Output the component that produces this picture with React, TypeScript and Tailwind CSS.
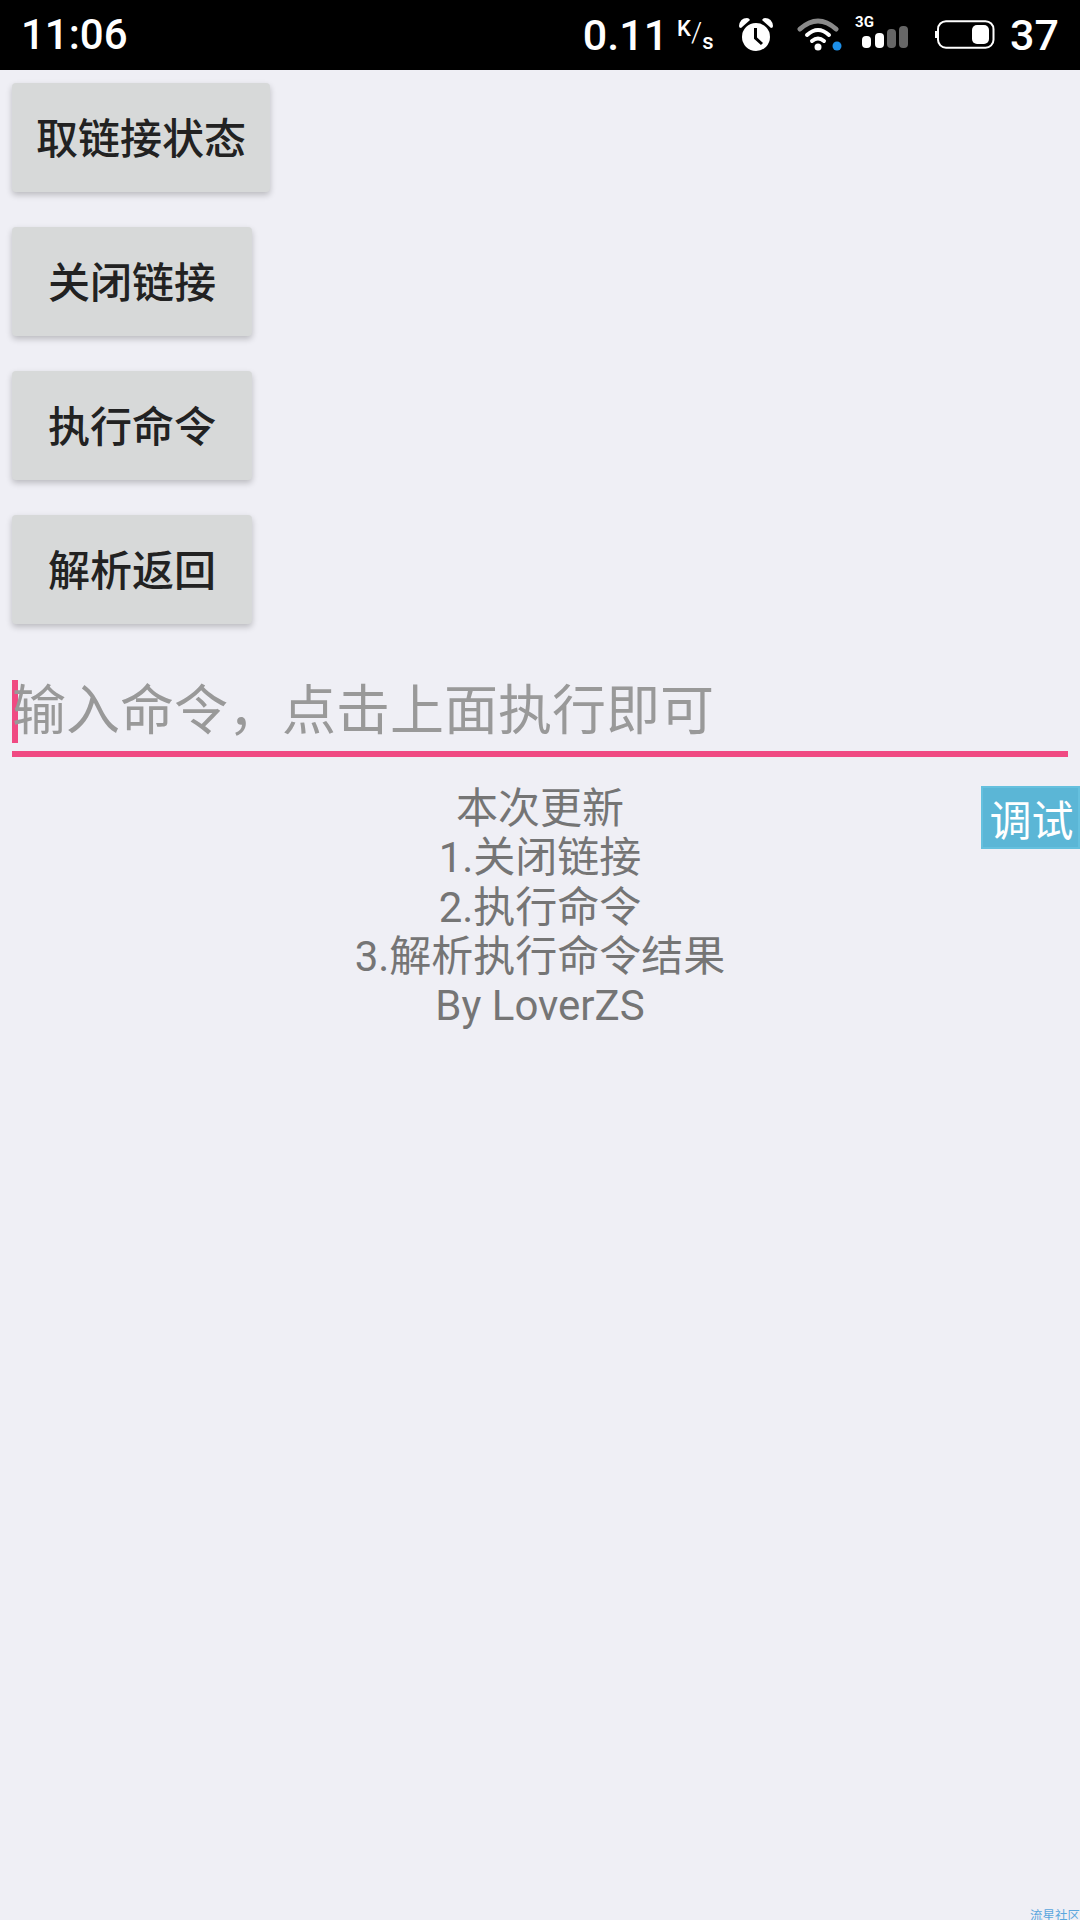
const cjk = "font-['Noto_Sans_CJK_SC','Roboto',sans-serif]";
const latin = "font-['Roboto','Noto_Sans_CJK_SC',sans-serif]";

function ActionButton({ label, width }: { label: string; width: string }) {
  return (
    <button
      className={`flex h-[109px] ${width} items-center justify-center rounded-[4px] bg-[#d7d9d9] pb-[4px] text-[42px] font-medium text-[#222222] shadow-[0_3px_6px_rgba(0,0,0,0.22)] ${cjk}`}
    >
      {label}
    </button>
  );
}

function AlarmIcon() {
  return (
    <svg width="38" height="36" viewBox="0 0 38 36" fill="none">
      <circle cx="19" cy="20" r="14" fill="#fff" />
      <path d="M2 9 Q3 1 10 1 Q12 1 13 3 L4 11 Q2 11 2 9Z" fill="#fff" />
      <path d="M36 9 Q35 1 28 1 Q26 1 25 3 L34 11 Q36 11 36 9Z" fill="#fff" />
      <path d="M18.5 11 V21 L25 27" stroke="#000" strokeWidth="3" />
    </svg>
  );
}

function WifiIcon() {
  return (
    <svg width="48" height="36" viewBox="0 0 48 36" fill="none">
      <path d="M3 12 Q21 -4 39 12" stroke="#8a8a8a" strokeWidth="5" strokeLinecap="round" />
      <path d="M10 18 Q21 8 32 18" stroke="#fff" strokeWidth="4" strokeLinecap="round" />
      <path d="M15 24 Q21 19 27 24" stroke="#fff" strokeWidth="4" strokeLinecap="round" />
      <circle cx="21" cy="30" r="3.5" fill="#fff" />
      <circle cx="40" cy="29" r="4.5" fill="#1d8fe8" />
    </svg>
  );
}

function SignalIcon() {
  return (
    <div className="flex w-[54px] flex-col">
      <span className="h-[13px] text-[15px] leading-[13px] font-bold text-white font-['Roboto',sans-serif]">3G</span>
      <svg className="mt-[-4px] ml-[7px]" width="47" height="24" viewBox="0 0 47 24">
        <rect x="0" y="11" width="9" height="12" rx="4" fill="#fff" />
        <rect x="13" y="8" width="9" height="15" rx="4" fill="#fff" />
        <rect x="25" y="4" width="9" height="19" rx="4" fill="#666" />
        <rect x="37" y="1" width="9" height="22" rx="4" fill="#666" />
      </svg>
    </div>
  );
}

function BatteryIcon() {
  return (
    <svg width="60" height="30" viewBox="0 0 60 30" fill="none">
      <rect x="3" y="1.2" width="55.5" height="26.5" rx="8" stroke="#fff" strokeWidth="2" />
      <rect x="0" y="11" width="2" height="7" fill="#fff" />
      <rect x="37" y="5" width="17" height="19" rx="5" fill="#fff" />
    </svg>
  );
}

function StatusBar() {
  return (
    <div className="flex h-[70px] items-center justify-between bg-black pr-[21px] pl-[21px] font-['Roboto',sans-serif] font-medium text-white">
      <span className="text-[42px] leading-none">11:06</span>
      <div className="flex items-center">
        <span className="text-[43px] leading-none">0.11</span>
        <div className="mr-[22px] ml-[9px] flex h-[40px] w-[38px] text-[22px]">
          <span className="leading-[28px]">K</span>
          <span className="mt-[2px] text-[28px] leading-[32px] font-light">/</span>
          <span className="mt-[14px] leading-[26px]">s</span>
        </div>
        <AlarmIcon />
        <div className="ml-[22px]">
          <WifiIcon />
        </div>
        <div className="mt-[-6px] ml-[10px]">
          <SignalIcon />
        </div>
        <div className="ml-[26px]">
          <BatteryIcon />
        </div>
        <span className="ml-[15px] text-[43px] leading-none">37</span>
      </div>
    </div>
  );
}

export default function App() {
  const notes = ["本次更新", "1.关闭链接", "2.执行命令", "3.解析执行命令结果", "By LoverZS"];

  return (
    <div className="relative h-[1920px] w-[1080px] overflow-hidden bg-[#efeff5]">
      <StatusBar />

      <div className="flex flex-col items-start gap-[35px] pt-[13px] pl-[12px]">
        <ActionButton label="取链接状态" width="w-[258px]" />
        <ActionButton label="关闭链接" width="w-[240px]" />
        <ActionButton label="执行命令" width="w-[240px]" />
        <ActionButton label="解析返回" width="w-[240px]" />
      </div>

      {/* Input */}
      <div className="mt-[55px] ml-[12px] w-[1056px]">
        <div className="flex h-[64px] items-center">
          <div className="h-[63px] w-[6px] bg-[#f04a82]" />
          <span className={`mt-[-8px] ml-[-6px] text-[54px] leading-none text-[#999999] ${cjk}`}>
            输入命令，点击上面执行即可
          </span>
        </div>
        <div className="mt-[8px] h-[6px] bg-[#f04a82]" />
      </div>

      {/* Update notes */}
      <div className={`mt-[27px] text-center text-[42px] leading-[49.3px] text-[#757575] ${latin}`}>
        {notes.map((line) => (
          <div key={line}>{line}</div>
        ))}
      </div>

      <div
        className={`absolute top-[786px] left-[981px] flex h-[63px] w-[99px] items-center justify-center border-2 border-[#65c0de] bg-[#5bb6d6] pl-[2px] text-[42px] leading-none text-white ${cjk}`}
      >
        调试
      </div>

      <div className={`absolute right-0 bottom-[-2px] text-[12.5px] leading-[15px] text-[#5ba6dd] ${cjk}`}>
        流星社区
      </div>
    </div>
  );
}
